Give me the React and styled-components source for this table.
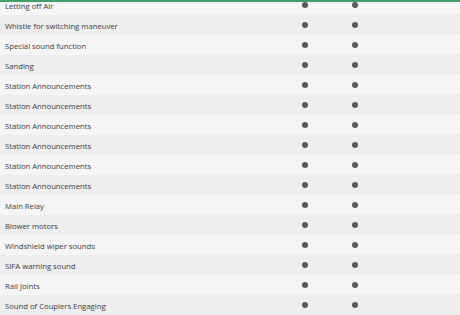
import React from "react";
import styled, { createGlobalStyle } from "styled-components";

const Global = createGlobalStyle`
  html, body { margin: 0; padding: 0; background: #ffffff; }
  body { font-family: "Open Sans", "Liberation Sans", sans-serif; }
`;

const Page = styled.div`
  position: relative;
  width: 460px;
  height: 315px;
  overflow: hidden;
`;

const TopRule = styled.div`
  position: absolute;
  top: 0;
  left: 0;
  right: 0;
  height: 2px;
  background: #3f9f66;
  z-index: 2;
`;

const Table = styled.div`
  margin-top: -5px;
  display: flex;
  flex-direction: column;
`;

const Row = styled.div`
  display: grid;
  grid-template-columns: 280px 50px 50px 1fr;
  align-items: center;
  height: 20px;
  background: ${(p) => (p.$alt ? "#eeeeee" : "#f5f5f5")};
  box-sizing: border-box;
`;

const Label = styled.div`
  padding-left: 5px;
  padding-top: 1px;
  font-size: 7.7px;
  font-weight: 500;
  color: #3c3c3c;
  white-space: nowrap;
`;

const Cell = styled.div`
  display: flex;
  justify-content: center;
  align-items: center;
`;

const Dot = styled.span`
  width: 6px;
  height: 6px;
  border-radius: 50%;
  background: #5a5a5a;
`;

const items = [
  "Letting off Air",
  "Whistle for switching maneuver",
  "Special sound function",
  "Sanding",
  "Station Announcements",
  "Station Announcements",
  "Station Announcements",
  "Station Announcements",
  "Station Announcements",
  "Station Announcements",
  "Main Relay",
  "Blower motors",
  "Windshield wiper sounds",
  "SIFA warning sound",
  "Rail Joints",
  "Sound of Couplers Engaging",
];

export default function App() {
  return (
    <Page>
      <Global />
      <TopRule />
      <Table>
        {items.map((t, i) => (
          <Row key={i} $alt={i % 2 === 1}>
            <Label>{t}</Label>
            <Cell><Dot /></Cell>
            <Cell><Dot /></Cell>
            <Cell />
          </Row>
        ))}
      </Table>
    </Page>
  );
}
